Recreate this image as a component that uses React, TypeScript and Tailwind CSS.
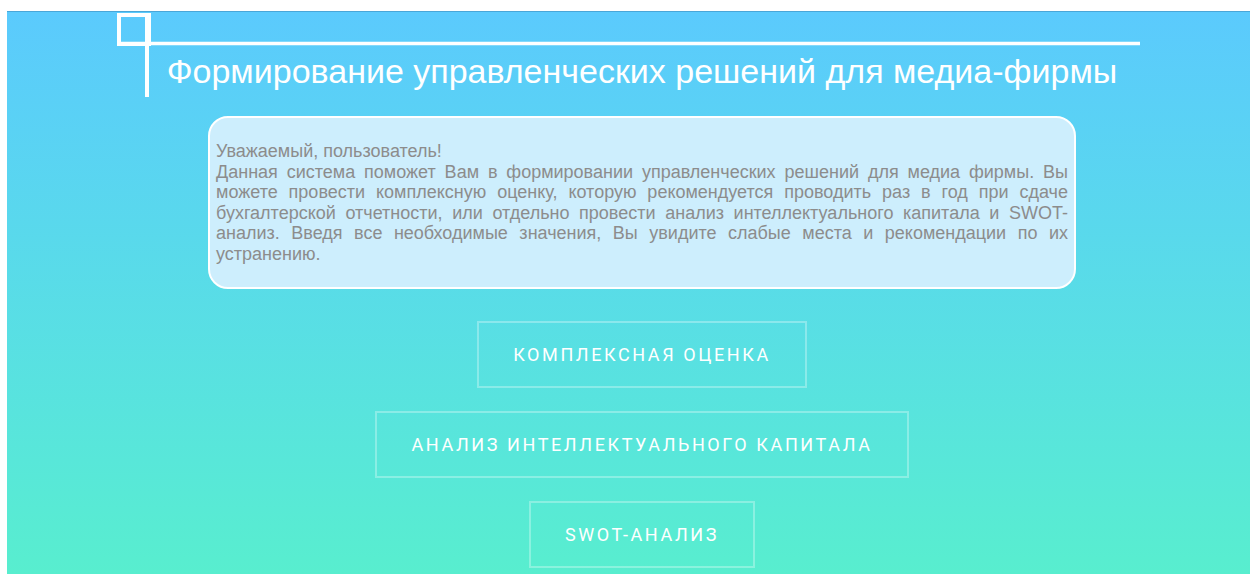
import React from "react";

const actions = [
  "Комплексная оценка",
  "Анализ интеллектуального капитала",
  "SWOT-анализ",
];

function CornerMark() {
  // square with crossing rules behind the title
  return (
    <svg
      className="absolute left-[110px] top-[1px]"
      width="1024"
      height="84"
      viewBox="0 0 1024 84"
      fill="none"
      stroke="white"
    >
      <rect x="2" y="2" width="30" height="29" strokeWidth="4" />
      <line x1="0" y1="30.5" x2="1023" y2="30.5" strokeWidth="3.5" />
      <line x1="30" y1="0" x2="30" y2="84" strokeWidth="4" />
    </svg>
  );
}

export default function App() {
  return (
    <div className="min-h-screen bg-white pl-[7px] pt-[11px]">
      <div className="relative min-h-[563px] border-t border-[#4aa6d8] bg-gradient-to-b from-[#5bcafd] to-[#58efcd] pl-[27px] pb-6">
        <CornerMark />
        <h1
          className="pt-[40px] text-center text-[34px] leading-[39px] text-white"
          style={{ fontFamily: '"Liberation Sans", Arial, sans-serif' }}
        >
          Формирование управленческих решений для медиа-фирмы
        </h1>

        <div
          className="mx-auto mt-[25px] w-[868px] rounded-[20px] border-2 border-white bg-[#cdeefd] px-[6px] py-[23px] text-justify text-[18px] leading-[20.5px] text-[#8c8c8c]"
          style={{ fontFamily: '"Liberation Sans", Arial, sans-serif' }}
        >
          <p>Уважаемый, пользователь!</p>
          <p>
            Данная система поможет Вам в формировании управленческих решений
            для медиа фирмы. Вы можете провести комплексную оценку, которую
            рекомендуется проводить раз в год при сдаче бухгалтерской
            отчетности, или отдельно провести анализ интеллектуального капитала
            и SWOT-анализ. Введя все необходимые значения, Вы увидите слабые
            места и рекомендации по их устранению.
          </p>
        </div>

        <div className="mt-[32px] flex flex-col items-center gap-[23px]">
          {actions.map((label) => (
            <button
              key={label}
              className="h-[67px] border-2 border-white/30 px-[34px] text-[18px] uppercase tracking-[2.6px] text-white"
              style={{ fontFamily: "Roboto, sans-serif" }}
            >
              {label}
            </button>
          ))}
        </div>
      </div>
    </div>
  );
}
